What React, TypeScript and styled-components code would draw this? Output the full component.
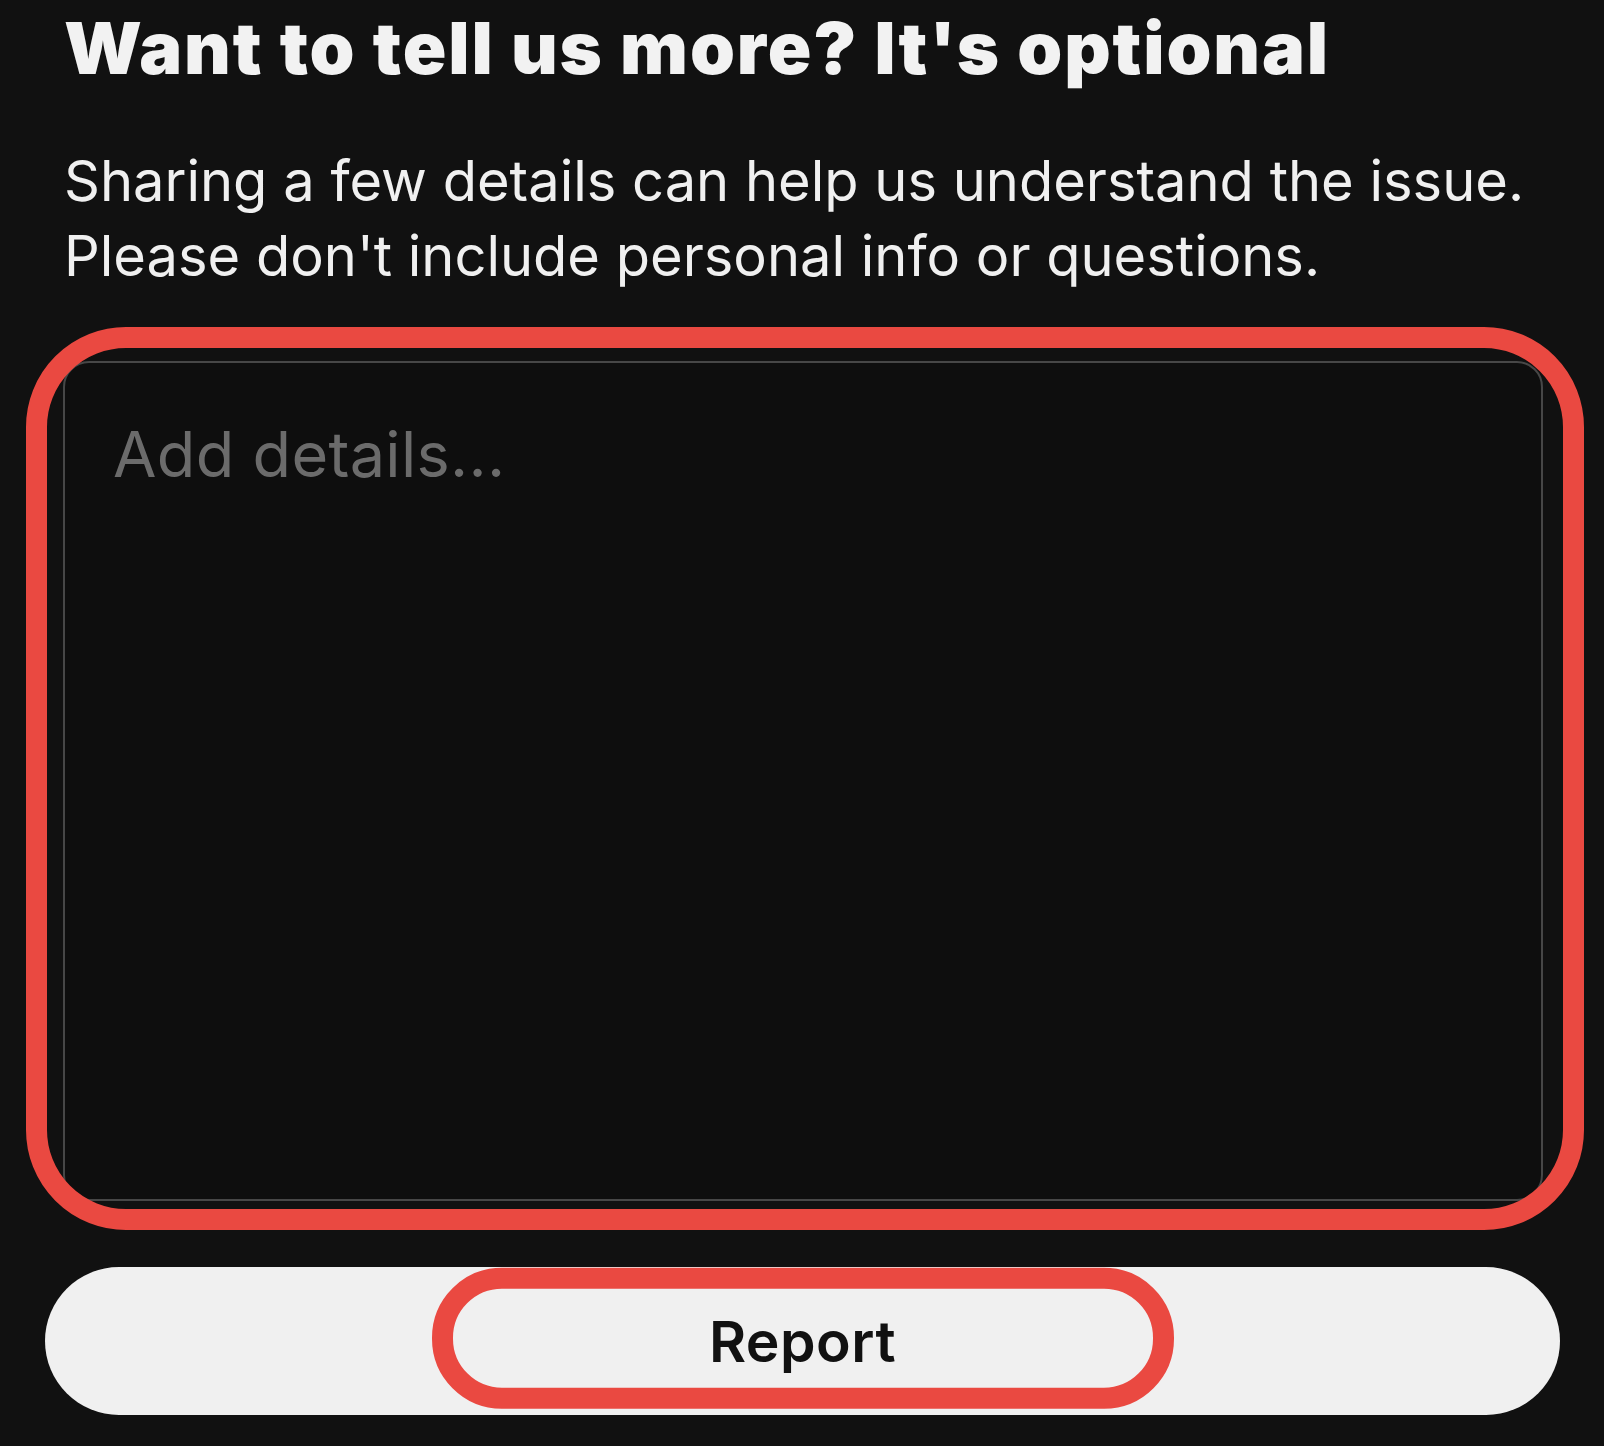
import React from "react";
import styled, { createGlobalStyle } from "styled-components";

const GlobalStyle = createGlobalStyle`
  html, body {
    margin: 0;
    padding: 0;
    background-color: #111111;
  }
  * {
    box-sizing: border-box;
  }
`;

const App = () => {
  return (
    <Page>
      <GlobalStyle />
      <Title>Want to tell us more? It's optional</Title>
      <Subtitle>
        Sharing a few details can help us understand the issue.
        <br />
        Please don't include personal info or questions.
      </Subtitle>
      <DetailsWrap>
        <DetailsInput placeholder="Add details..." />
        <DetailsRing />
      </DetailsWrap>
      <ReportButton type="button">
        <ReportRing />
        <ReportLabel>Report</ReportLabel>
      </ReportButton>
    </Page>
  );
};

export default App;

const Page = styled.div`
  width: 1604px;
  height: 1446px;
  background-color: #111111;
  padding: 12px 44px 0 45px;
  display: flex;
  flex-direction: column;
  font-family: Inter, "Noto Sans", "Liberation Sans", sans-serif;
  overflow: hidden;
`;

const Title = styled.h1`
  margin: 0 0 0 19px;
  font-size: 72px;
  line-height: 72px;
  font-weight: 900;
  letter-spacing: 1.9px;
  color: #f2f2f2;
  white-space: nowrap;
`;

const Subtitle = styled.p`
  margin: 60px 0 0 19px;
  font-size: 56px;
  line-height: 74.5px;
  font-weight: 400;
  color: #f0f0f0;
  white-space: nowrap;
`;

const DetailsWrap = styled.div`
  position: relative;
  margin: 68px 17px 0 18px;
  height: 840px;
`;

const DetailsInput = styled.textarea`
  display: block;
  width: 100%;
  height: 100%;
  resize: none;
  border: 2px solid #474747;
  border-radius: 26px;
  background-color: #0e0e0e;
  color: #f0f0f0;
  font-family: Inter, "Noto Sans", "Liberation Sans", sans-serif;
  font-size: 63px;
  line-height: 76px;
  letter-spacing: 0.3px;
  padding: 53px 48px;
  outline: none;

  &::placeholder {
    color: #6b6b6b;
  }
`;

const DetailsRing = styled.div`
  position: absolute;
  top: -34px;
  left: -37px;
  right: -41px;
  bottom: -29px;
  border: 21px solid #ea4941;
  border-radius: 100px;
  pointer-events: none;
`;

const ReportButton = styled.button`
  position: relative;
  margin-top: 66px;
  width: 1515px;
  height: 148px;
  border: none;
  border-radius: 74px;
  background-color: #f0f0f0;
  display: flex;
  align-items: center;
  justify-content: center;
  cursor: pointer;
  padding: 0;
`;

const ReportRing = styled.span`
  position: absolute;
  left: 50%;
  top: 50%;
  width: 742px;
  height: 141px;
  transform: translate(-50%, -52%);
  border: 21px solid #ea4941;
  border-radius: 70px;
  pointer-events: none;
`;

const ReportLabel = styled.span`
  position: relative;
  font-family: Inter, "Noto Sans", "Liberation Sans", sans-serif;
  font-size: 57px;
  font-weight: 600;
  color: #111111;
  letter-spacing: 0.5px;
`;
